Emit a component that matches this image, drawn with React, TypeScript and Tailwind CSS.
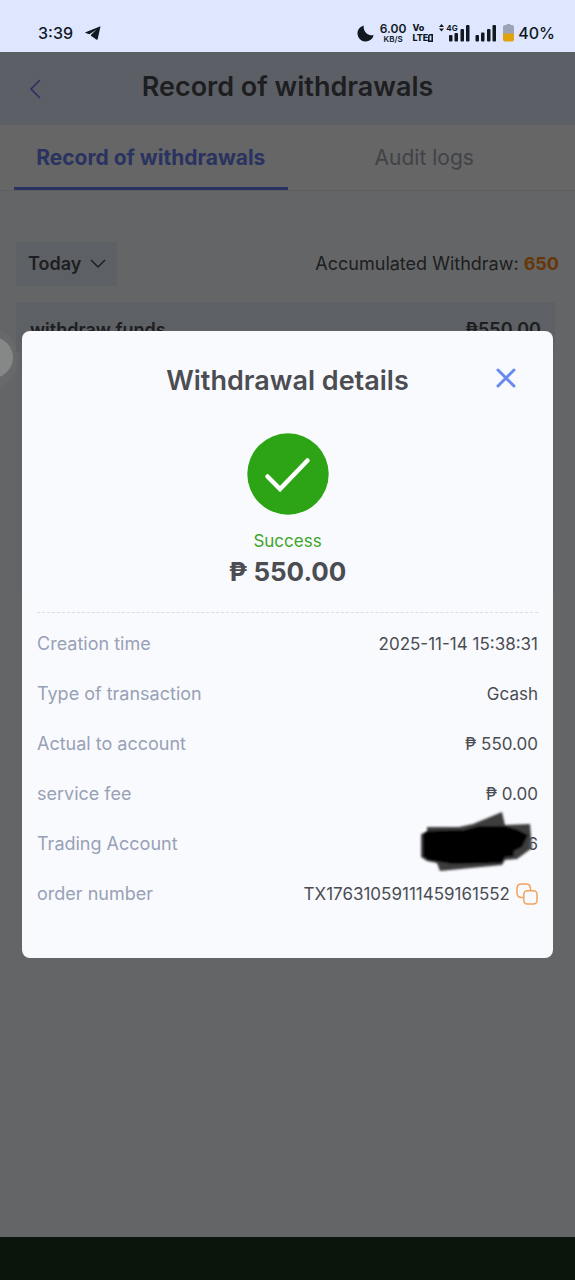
import type { ReactNode } from "react";

function StatusBar() {
  return (
    <div className="flex h-[52px] shrink-0 items-center justify-between bg-[#dee7ff] pt-[14px] pr-5 pl-[38px] text-[#11181f]">
      <div className="flex items-center gap-3">
        <span className="text-base font-medium">3:39</span>
        <svg width="16" height="14" viewBox="0 0 16 14" fill="currentColor" aria-hidden="true">
          <path d="M15.5.3.6 6.2c-.5.3-.4.7.1.9l3.7 1.1 7.2-4.8L6 8.8l-.1 1 5.4 3.7c.7.4 1.3.2 1.5-.7z" />
        </svg>
      </div>
      <div className="flex items-center">
        <svg width="17" height="17" viewBox="0 0 17 17" fill="currentColor" aria-hidden="true">
          <path d="M6.8.4A8.2 8.2 0 1 0 16.7 10 8.2 8.2 0 0 1 6.8.4z" />
        </svg>
        <span className="ml-[6px] flex flex-col items-center font-semibold">
          <span className="text-xs leading-3">6.00</span>
          <span className="text-[8px] leading-[8px]">KB/S</span>
        </span>
        <span className="ml-[6px] flex flex-col text-[9px] leading-[10px] font-extrabold">
          <span>Vo</span>
          <span className="flex items-center">
            LTE
            <svg width="5" height="8" viewBox="0 0 5 8" fill="none" stroke="currentColor" strokeWidth="1.6" aria-hidden="true">
              <path d="M.8 7.2V2L2 .8h2.200v6.400z" />
            </svg>
          </span>
        </span>
        <span className="relative ml-[6px] h-[18px] w-[31px]">
          <svg className="size-full" viewBox="0 0 31 18" fill="currentColor" aria-hidden="true">
            <path d="M0 3 2.5 0 5 3zM0 4.5h5l-2.5 3z" />
            <rect x="10" y="11" width="3.5" height="6.5" rx="1" />
            <rect x="15.5" y="9" width="3.5" height="8.5" rx="1" />
            <rect x="21.5" y="5" width="3.5" height="12.5" rx="1" />
            <rect x="27" y="1" width="3.5" height="16.5" rx="1" />
          </svg>
          <span className="absolute top-0 left-[7px] text-[8px] leading-[8px] font-bold">4G</span>
        </span>
        <svg className="ml-[5px]" width="22" height="18" viewBox="0 0 22 18" fill="currentColor" aria-hidden="true">
          <rect x="0.5" y="11" width="3.5" height="6.5" rx="1" />
          <rect x="6" y="8.5" width="3.5" height="9" rx="1" />
          <rect x="12" y="5" width="3.5" height="12.5" rx="1" />
          <rect x="17.5" y="1" width="3.5" height="16.5" rx="1" />
        </svg>
        <svg className="ml-[6px]" width="11" height="18" viewBox="0 0 11 18" aria-hidden="true">
          <path d="M3.5 1q0-1 1-1h2q1 0 1 1H9q2 0 2 2v7H0V3q0-2 2-2z" fill="#9ca4b8" />
          <path d="M0 9.5h11v6q0 2-2 2H2q-2 0-2-2z" fill="#e3a10b" />
        </svg>
        <span className="ml-1 text-base leading-5 font-medium">40%</span>
      </div>
    </div>
  );
}

function RecordsPage() {
  return (
    <div className="flex flex-1 flex-col bg-[#fbfcff] text-[#4b4d52]">
      <header className="flex h-[73px] items-center bg-[#e6eefe] px-[28px]">
        <button type="button" aria-label="Back" className="w-6 text-[#6a78ee]">
          <svg width="16" height="20" viewBox="0 0 16 20" fill="none" stroke="currentColor" strokeWidth="1.6" aria-hidden="true">
            <path d="M12 1 3 10l9 9" />
          </svg>
        </button>
        <h1 className="flex-1 pr-6 pb-1 text-center text-[27px] leading-8 font-semibold">Record of withdrawals</h1>
      </header>
      <nav className="grid h-[66px] grid-cols-2 border-b border-[#e8ebf2] bg-white px-[14px] text-[21px]">
        <button type="button" className="border-y-[3px] border-t-transparent border-b-[#6a78ee] font-bold text-[#6a7fee]">
          Record of withdrawals
        </button>
        <button type="button" className="text-[#a2a6b2]">
          Audit logs
        </button>
      </nav>
      <div className="mt-[51px] flex items-center justify-between px-4">
        <div className="relative flex h-11 w-[101px] items-center bg-[#e9effb]">
          <select
            aria-label="Period"
            className="h-full w-full appearance-none bg-transparent pl-3 text-lg font-semibold outline-none"
          >
            <option>Today</option>
          </select>
          <svg
            className="pointer-events-none absolute right-[11px]"
            width="16"
            height="10"
            viewBox="0 0 16 10"
            fill="none"
            stroke="currentColor"
            strokeWidth="1.5"
            aria-hidden="true"
          >
            <path d="M1 1l7 7 7-7" />
          </svg>
        </div>
        <p className="text-lg leading-6">
          Accumulated Withdraw: <strong className="font-bold text-[#ff8a10]">650</strong>
        </p>
      </div>
      <div className="mt-4 mr-5 ml-4 bg-[#f5f8fe] pb-[240px]">
        <div className="flex justify-between bg-[#e9effb] px-[14px] pt-[14px] pb-2 text-lg leading-7 font-semibold">
          <span>withdraw funds</span>
          <span>₱550.00</span>
        </div>
      </div>
    </div>
  );
}

function Detail({ label, children }: { label: string; children: ReactNode }) {
  return (
    <div className="flex h-[50px] items-center justify-between">
      <dt className="text-lg leading-6 text-[#98a1b6]">{label}</dt>
      <dd className="flex items-center text-[17px] leading-6 text-[#4b4d52]">{children}</dd>
    </div>
  );
}

function Scribble() {
  return (
    <svg className="absolute -top-[22px] -left-[108px]" width="120" height="64" viewBox="0 0 120 64" aria-hidden="true">
      <defs>
        <filter id="soft-edge" x="-10%" y="-10%" width="120%" height="120%">
          <feGaussianBlur stdDeviation="1" />
        </filter>
      </defs>
      <g filter="url(#soft-edge)">
        <path fill="#3c3c3e" d="M8 17 40 17 54 14 83 2 86 15 111 14 113 38 98 49 86 50 83 55 21 61 18 53 8 51 2 47 2 24 8 22z" />
        <path fill="#000" d="M4 24 8 21 45 20 60 16 86 16 99 20 109 25 103 37 95 41 95 46 86 47 82 53 34 54 9 50 4 46z" />
      </g>
    </svg>
  );
}

function WithdrawalDialog() {
  return (
    <section
      role="dialog"
      aria-modal="true"
      aria-labelledby="dialog-title"
      className="w-full rounded-lg bg-[#f9fafe] px-[15px] pt-[31px] pb-[39px]"
    >
      <div className="relative">
        <h2 id="dialog-title" className="text-center text-[27px] leading-[38px] font-semibold text-[#4b4d52]">
          Withdrawal details
        </h2>
        <button type="button" aria-label="Close" className="absolute top-0.5 right-[18px] p-1 text-[#668aef]">
          <svg width="20" height="20" viewBox="0 0 20 20" fill="none" stroke="currentColor" strokeWidth="3" strokeLinecap="round" aria-hidden="true">
            <path d="M2 2l16 16M18 2 2 18" />
          </svg>
        </button>
      </div>
      <div className="mt-[33px] flex flex-col items-center">
        <svg width="82" height="82" viewBox="0 0 82 82" fill="none" aria-hidden="true">
          <circle cx="41" cy="41" r="40.7" fill="#2ca415" />
          <path d="M20.5 43.5 33 56l27.500-28.500" stroke="#fff" strokeWidth="4.5" strokeLinecap="round" />
        </svg>
        <p className="mt-[14px] text-[17px] leading-6 text-[#3ba62b]">Success</p>
        <p className="text-[26px] leading-[38px] font-bold text-[#4b4d52]">₱ 550.00</p>
      </div>
      <dl className="mt-[21px] border-t border-dashed border-[#d9dce4] pt-[6px]">
        <Detail label="Creation time">2025-11-14 15:38:31</Detail>
        <Detail label="Type of transaction">Gcash</Detail>
        <Detail label="Actual to account">₱ 550.00</Detail>
        <Detail label="service fee">₱ 0.00</Detail>
        <Detail label="Trading Account">
          <span className="relative">
            <Scribble />
            <span className="relative">6</span>
          </span>
        </Detail>
        <Detail label="order number">
          TX17631059111459161552
          <button type="button" aria-label="Copy order number" className="ml-[6px] text-[#f1a25c]">
            <svg width="22" height="22" viewBox="0 0 22 22" fill="none" stroke="currentColor" strokeWidth="1.5" aria-hidden="true">
              <path d="M7.5 14.5h-2Q1 14.500 1 10V5.500Q1 1 5.500 1H10q4.500 0 4.500 4.500v2" />
              <rect x="7.8" y="7.8" width="13.2" height="13.2" rx="3.5" />
            </svg>
          </button>
        </Detail>
      </dl>
    </section>
  );
}

export default function App() {
  return (
    <div className="flex min-h-screen flex-col font-['Inter',sans-serif]">
      <StatusBar />
      <main className="relative flex flex-1 flex-col overflow-hidden">
        <RecordsPage />
        <div className="absolute inset-0 flex items-center justify-center bg-black/60 px-[22px]">
          <span className="absolute top-[275px] -left-[46px] size-16 rounded-full bg-white/3" />
          <span className="absolute top-[285px] -left-[28px] size-[41px] rounded-full bg-white/20" />
          <WithdrawalDialog />
        </div>
      </main>
      <div className="h-[43px] shrink-0 bg-[#0c150b]" />
    </div>
  );
}
